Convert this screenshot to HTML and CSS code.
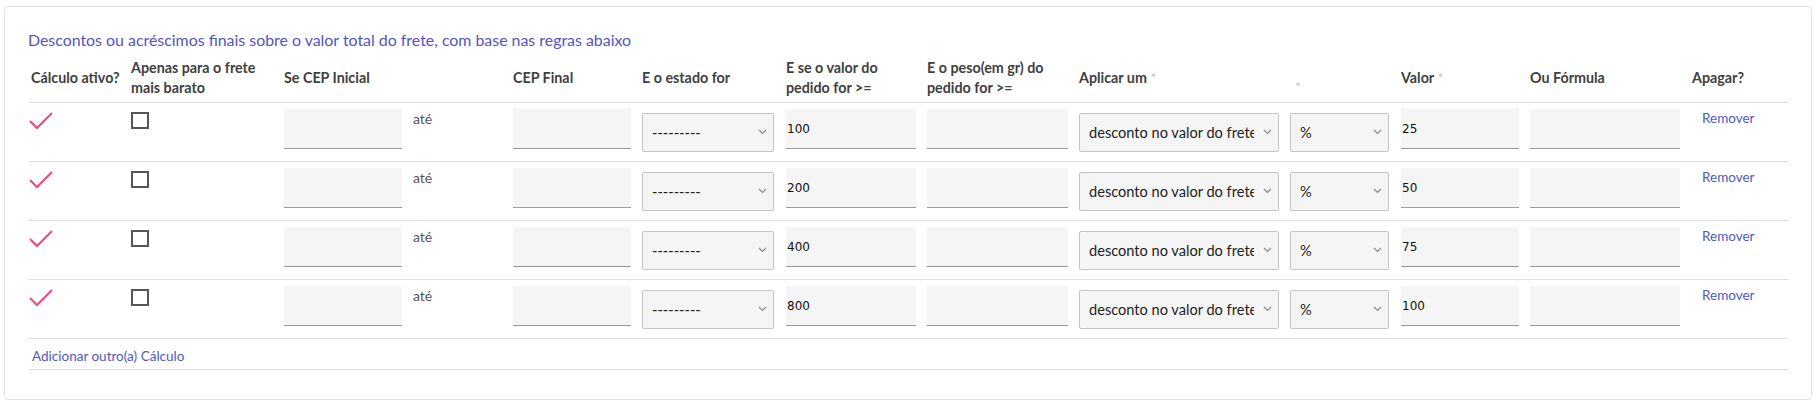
FILE: index.html
```html
<!DOCTYPE html>
<html lang="pt">
<head>
<meta charset="utf-8">
<title>Cálculos</title>
<link rel="stylesheet" href="styles.css">
</head>
<body>
<div class="card">
  <p class="title">Descontos ou acréscimos finais sobre o valor total do frete, com base nas regras abaixo</p>
  <table class="grid">
    <colgroup>
      <col class="c1"><col class="c2"><col class="c3"><col class="c4"><col class="c5"><col class="c6"><col class="c7"><col class="c8"><col class="c9"><col class="c10"><col class="c11"><col class="c12"><col class="c13">
    </colgroup>
    <thead>
      <tr>
        <th>Cálculo ativo?</th>
        <th>Apenas para o frete mais barato</th>
        <th>Se CEP Inicial</th>
        <th></th>
        <th>CEP Final</th>
        <th>E o estado for</th>
        <th>E se o valor do pedido for &gt;=</th>
        <th>E o peso(em gr) do pedido for &gt;=</th>
        <th>Aplicar um <span class="req">*</span></th>
        <th><span class="req low">*</span></th>
        <th>Valor <span class="req">*</span></th>
        <th>Ou Fórmula</th>
        <th>Apagar?</th>
      </tr>
    </thead>
    <tbody>
      <tr>
        <td><svg class="check" width="24" height="18" viewBox="0 0 24 18"><polyline points="1,9 8,16 23,1" fill="none" stroke="#f4457f" stroke-width="2"/></svg></td>
        <td><span class="box"></span></td>
        <td><input class="field w118" type="text"></td>
        <td class="ate">até</td>
        <td><input class="field w118" type="text"></td>
        <td><span class="selwrap w132"><select class="sel"><option>---------</option></select><svg class="chev" width="9" height="6" viewBox="0 0 9 6"><polyline points="1,1 4.5,4.5 8,1" fill="none" stroke="#8a8a8a" stroke-width="1.2"/></svg></span></td>
        <td><input class="field w130" type="text" value="100"></td>
        <td><input class="field w141" type="text"></td>
        <td><span class="selwrap w200"><select class="sel"><option>desconto no valor do frete</option></select><svg class="chev" width="9" height="6" viewBox="0 0 9 6"><polyline points="1,1 4.5,4.5 8,1" fill="none" stroke="#8a8a8a" stroke-width="1.2"/></svg></span></td>
        <td><span class="selwrap w99"><select class="sel"><option>%</option></select><svg class="chev" width="9" height="6" viewBox="0 0 9 6"><polyline points="1,1 4.5,4.5 8,1" fill="none" stroke="#8a8a8a" stroke-width="1.2"/></svg></span></td>
        <td><input class="field w118" type="text" value="25"></td>
        <td><input class="field w150" type="text"></td>
        <td><a class="link remove" href="#">Remover</a></td>
      </tr>
      <tr>
        <td><svg class="check" width="24" height="18" viewBox="0 0 24 18"><polyline points="1,9 8,16 23,1" fill="none" stroke="#f4457f" stroke-width="2"/></svg></td>
        <td><span class="box"></span></td>
        <td><input class="field w118" type="text"></td>
        <td class="ate">até</td>
        <td><input class="field w118" type="text"></td>
        <td><span class="selwrap w132"><select class="sel"><option>---------</option></select><svg class="chev" width="9" height="6" viewBox="0 0 9 6"><polyline points="1,1 4.5,4.5 8,1" fill="none" stroke="#8a8a8a" stroke-width="1.2"/></svg></span></td>
        <td><input class="field w130" type="text" value="200"></td>
        <td><input class="field w141" type="text"></td>
        <td><span class="selwrap w200"><select class="sel"><option>desconto no valor do frete</option></select><svg class="chev" width="9" height="6" viewBox="0 0 9 6"><polyline points="1,1 4.5,4.5 8,1" fill="none" stroke="#8a8a8a" stroke-width="1.2"/></svg></span></td>
        <td><span class="selwrap w99"><select class="sel"><option>%</option></select><svg class="chev" width="9" height="6" viewBox="0 0 9 6"><polyline points="1,1 4.5,4.5 8,1" fill="none" stroke="#8a8a8a" stroke-width="1.2"/></svg></span></td>
        <td><input class="field w118" type="text" value="50"></td>
        <td><input class="field w150" type="text"></td>
        <td><a class="link remove" href="#">Remover</a></td>
      </tr>
      <tr>
        <td><svg class="check" width="24" height="18" viewBox="0 0 24 18"><polyline points="1,9 8,16 23,1" fill="none" stroke="#f4457f" stroke-width="2"/></svg></td>
        <td><span class="box"></span></td>
        <td><input class="field w118" type="text"></td>
        <td class="ate">até</td>
        <td><input class="field w118" type="text"></td>
        <td><span class="selwrap w132"><select class="sel"><option>---------</option></select><svg class="chev" width="9" height="6" viewBox="0 0 9 6"><polyline points="1,1 4.5,4.5 8,1" fill="none" stroke="#8a8a8a" stroke-width="1.2"/></svg></span></td>
        <td><input class="field w130" type="text" value="400"></td>
        <td><input class="field w141" type="text"></td>
        <td><span class="selwrap w200"><select class="sel"><option>desconto no valor do frete</option></select><svg class="chev" width="9" height="6" viewBox="0 0 9 6"><polyline points="1,1 4.5,4.5 8,1" fill="none" stroke="#8a8a8a" stroke-width="1.2"/></svg></span></td>
        <td><span class="selwrap w99"><select class="sel"><option>%</option></select><svg class="chev" width="9" height="6" viewBox="0 0 9 6"><polyline points="1,1 4.5,4.5 8,1" fill="none" stroke="#8a8a8a" stroke-width="1.2"/></svg></span></td>
        <td><input class="field w118" type="text" value="75"></td>
        <td><input class="field w150" type="text"></td>
        <td><a class="link remove" href="#">Remover</a></td>
      </tr>
      <tr>
        <td><svg class="check" width="24" height="18" viewBox="0 0 24 18"><polyline points="1,9 8,16 23,1" fill="none" stroke="#f4457f" stroke-width="2"/></svg></td>
        <td><span class="box"></span></td>
        <td><input class="field w118" type="text"></td>
        <td class="ate">até</td>
        <td><input class="field w118" type="text"></td>
        <td><span class="selwrap w132"><select class="sel"><option>---------</option></select><svg class="chev" width="9" height="6" viewBox="0 0 9 6"><polyline points="1,1 4.5,4.5 8,1" fill="none" stroke="#8a8a8a" stroke-width="1.2"/></svg></span></td>
        <td><input class="field w130" type="text" value="800"></td>
        <td><input class="field w141" type="text"></td>
        <td><span class="selwrap w200"><select class="sel"><option>desconto no valor do frete</option></select><svg class="chev" width="9" height="6" viewBox="0 0 9 6"><polyline points="1,1 4.5,4.5 8,1" fill="none" stroke="#8a8a8a" stroke-width="1.2"/></svg></span></td>
        <td><span class="selwrap w99"><select class="sel"><option>%</option></select><svg class="chev" width="9" height="6" viewBox="0 0 9 6"><polyline points="1,1 4.5,4.5 8,1" fill="none" stroke="#8a8a8a" stroke-width="1.2"/></svg></span></td>
        <td><input class="field w118" type="text" value="100"></td>
        <td><input class="field w150" type="text"></td>
        <td><a class="link remove" href="#">Remover</a></td>
      </tr>
    </tbody>
    <tfoot>
      <tr>
        <td colspan="13" class="addcell"><a class="link add" href="#">Adicionar outro(a) Cálculo</a></td>
      </tr>
    </tfoot>
  </table>
</div>
</body>
</html>
```

FILE: styles.css
```css
html, body {
  margin: 0;
  padding: 0;
  background: #ffffff;
}
body {
  font-family: Lato, "Noto Sans", sans-serif;
  color: #444444;
}
.card {
  box-sizing: border-box;
  margin: 6px 0 0 4px;
  width: 1808px;
  height: 394px;
  border: 1px solid #e2e2e2;
  border-radius: 4px;
  padding: 21px 0 0 23px;
}
.title {
  margin: 0;
  font-size: 15.9px;
  line-height: 24px;
  color: #5353c3;
}
.grid {
  border-collapse: collapse;
  table-layout: fixed;
  width: 1761px;
  margin-top: 4px;
}
.c1 { width: 103px; }
.c2 { width: 153px; }
.c3 { width: 129px; }
.c4 { width: 100px; }
.c5 { width: 129px; }
.c6 { width: 144px; }
.c7 { width: 141px; }
.c8 { width: 152px; }
.c9 { width: 211px; }
.c10 { width: 111px; }
.c11 { width: 129px; }
.c12 { width: 162px; }
.c13 { width: 97px; }
th {
  text-align: left;
  font-weight: 700;
  font-size: 14.3px;
  line-height: 20px;
  color: #404040;
  padding: 2px 10px 4px 0;
  height: 44px;
  box-sizing: border-box;
  vertical-align: middle;
  border-bottom: 1px solid #e0e0e0;
}
th:first-child { padding-left: 3px; padding-right: 0; }
.req {
  color: #c4c4c4;
  font-weight: 400;
  font-size: 14px;
}
.req.low {
  position: relative;
  top: 9px;
  left: 5px;
}
tbody td {
  height: 59px;
  padding: 0;
  vertical-align: top;
  border-bottom: 1px solid #e0e0e0;
  box-sizing: border-box;
}
tbody td:first-child { padding-left: 1px; }
.check {
  display: block;
  margin-top: 9px;
}
.box {
  display: block;
  box-sizing: border-box;
  width: 18px;
  height: 17px;
  border: 2px solid #555555;
  margin-top: 9px;
}
.field {
  display: block;
  box-sizing: border-box;
  height: 40px;
  margin-top: 6px;
  border: 0;
  border-bottom: 1px solid #9a9a9a;
  background: #f5f5f5;
  padding: 0 1px;
  font-family: "DejaVu Sans", sans-serif;
  font-size: 12px;
  color: #111111;
  outline: none;
}
.selwrap {
  position: relative;
  display: block;
  height: 39px;
  margin-top: 10px;
}
.sel {
  display: block;
  box-sizing: border-box;
  width: 100%;
  height: 39px;
  -webkit-appearance: none;
  appearance: none;
  border: 1px solid #c4c4c4;
  border-radius: 2px;
  background-color: #f5f5f5;
  padding: 0 24px 0 9px;
  font-family: Lato, "Noto Sans", sans-serif;
  font-size: 14.6px;
  color: #222222;
  outline: none;
}
.chev {
  position: absolute;
  right: 7px;
  top: 16px;
}
.w99 { width: 99px; }
.w118 { width: 118px; }
.w130 { width: 130px; }
.w132 { width: 132px; }
.w141 { width: 141px; }
.w150 { width: 150px; }
.w200 { width: 200px; }
.ate {
  font-size: 14px;
  line-height: 20px;
  padding-top: 6px;
  color: #555555;
}
.link {
  color: #4c5bc4;
  text-decoration: none;
  font-size: 13.5px;
}
.remove {
  display: block;
  margin: 5px 0 0 10px;
  line-height: 20px;
}
.addcell {
  height: 31px;
  box-sizing: border-box;
  padding: 0 0 0 4px;
  vertical-align: middle;
  border-bottom: 1px solid #e0e0e0;
}
```
